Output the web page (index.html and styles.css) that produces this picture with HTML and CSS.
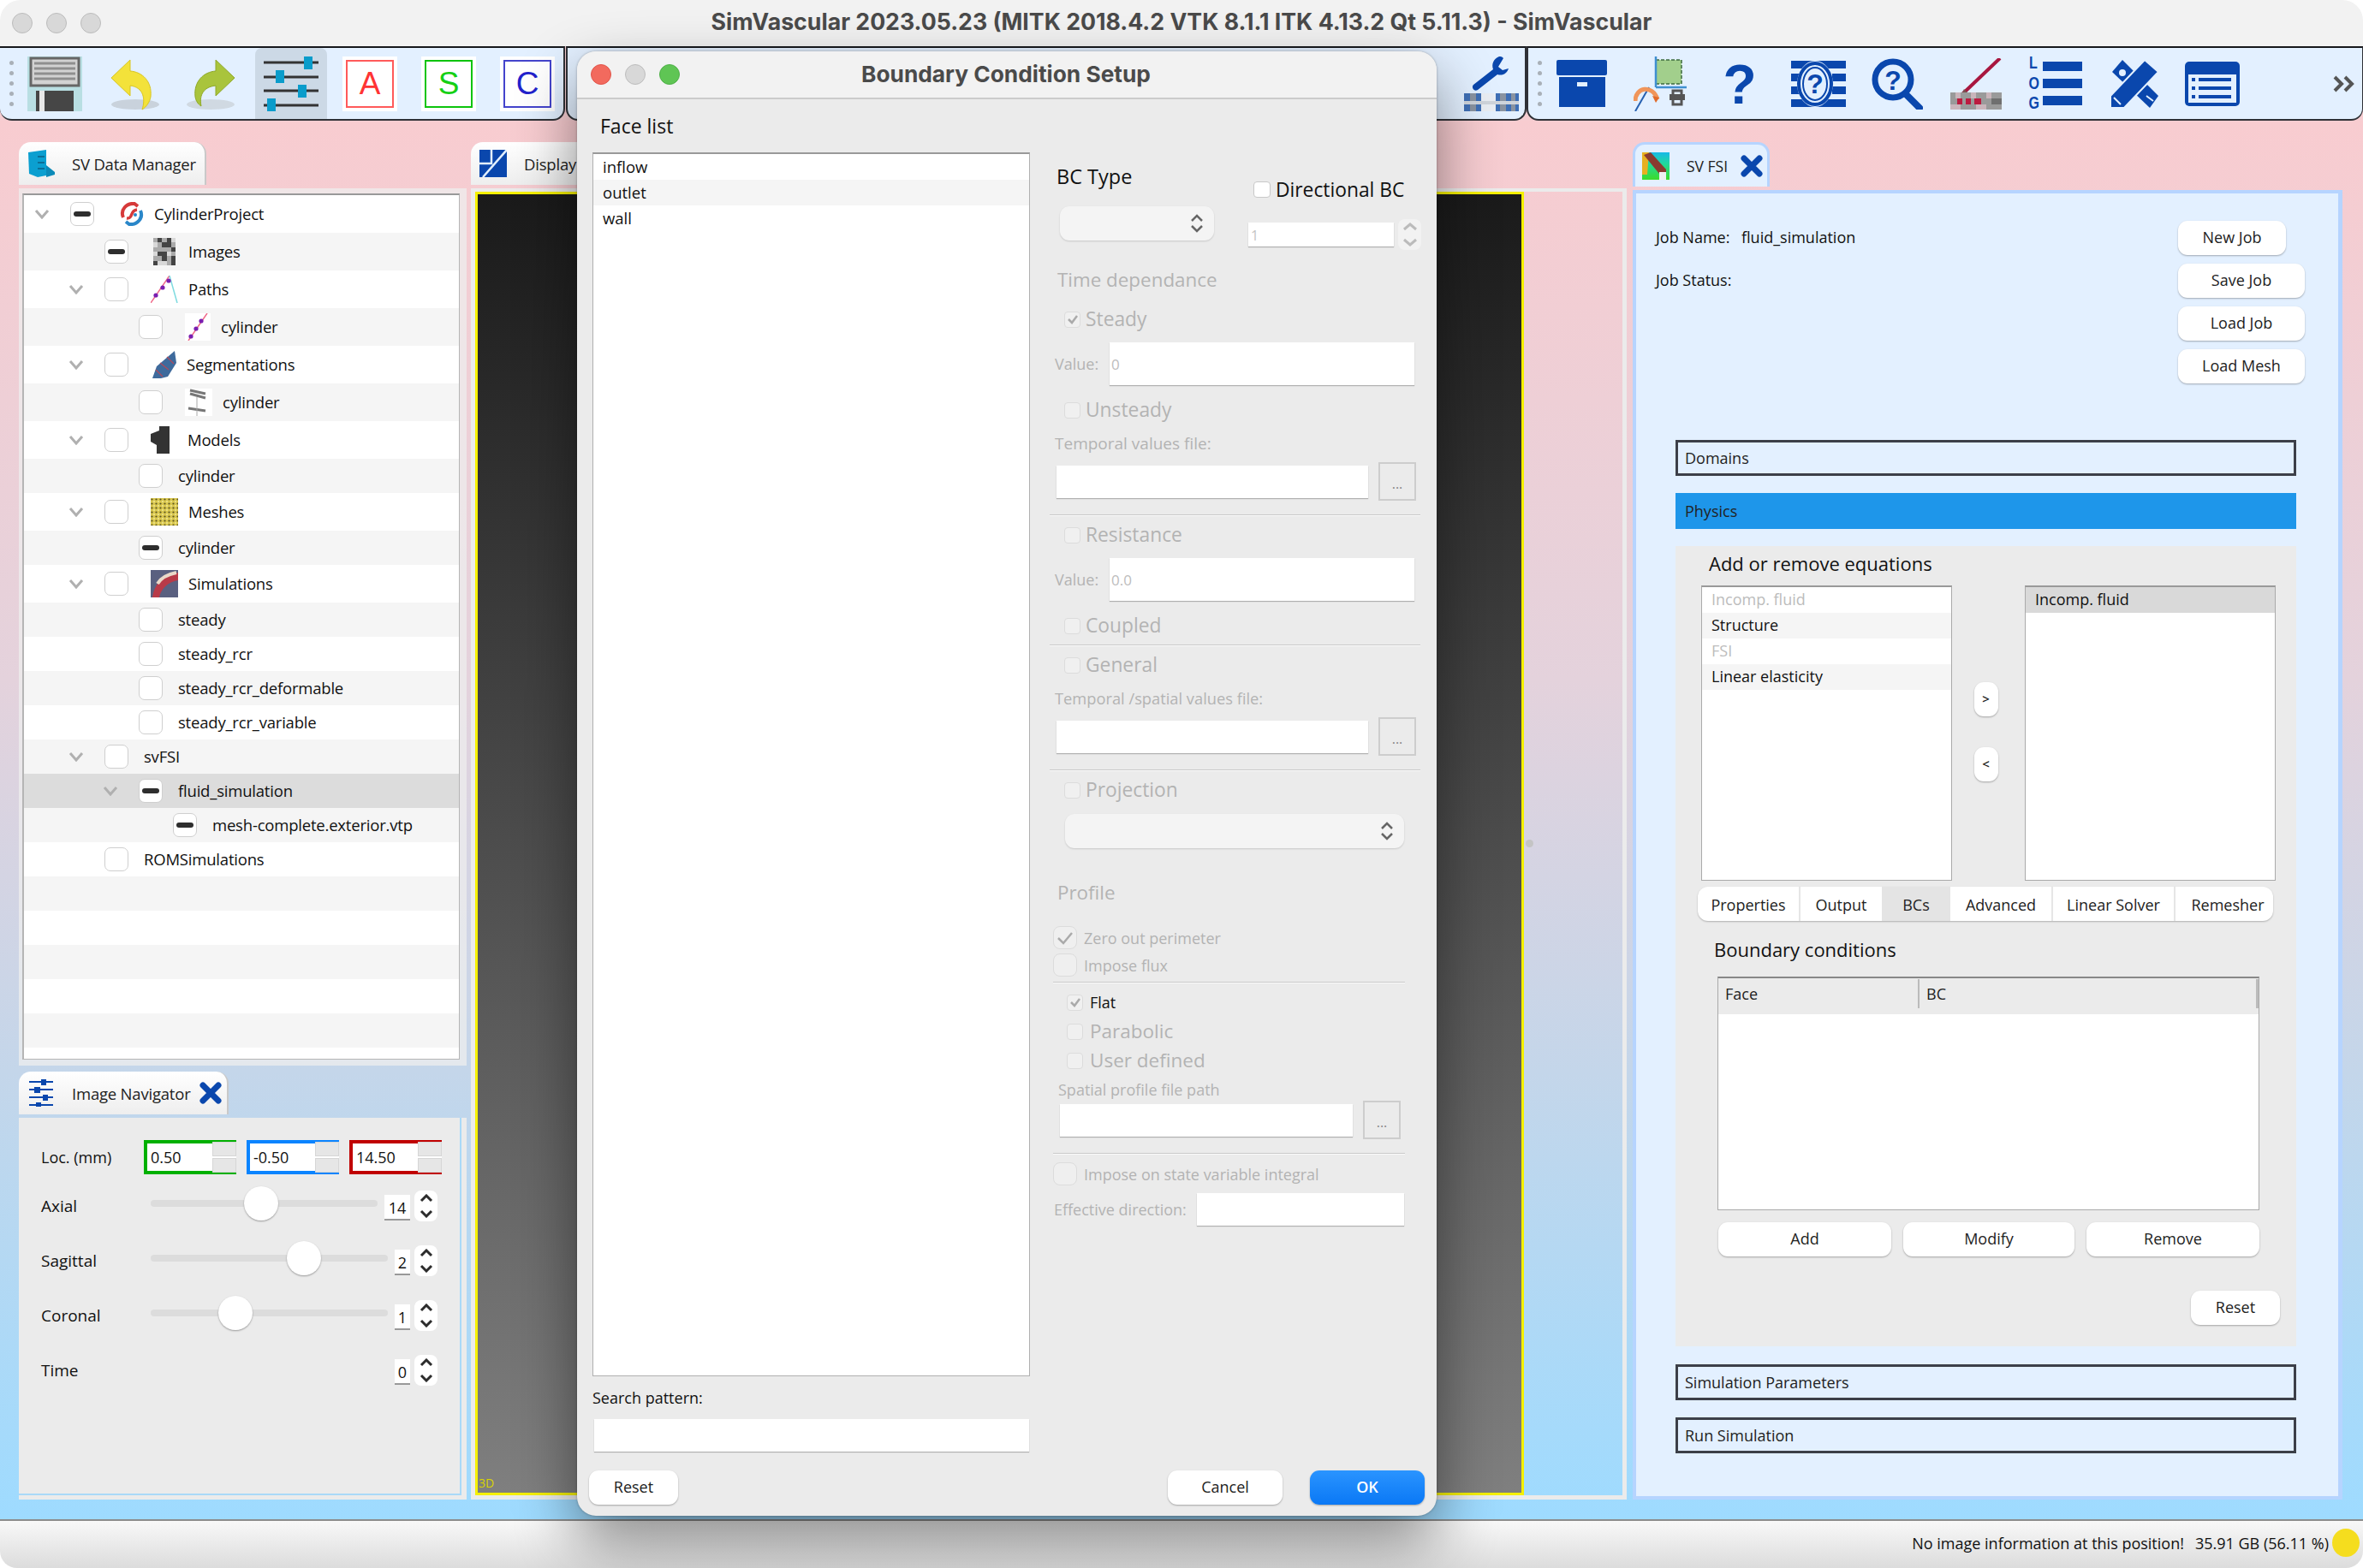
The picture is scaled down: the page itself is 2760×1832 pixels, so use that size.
FILE: index.html
```html
<!DOCTYPE html>
<html lang="en">
<head>
<meta charset="utf-8">
<title>SimVascular</title>
<link rel="stylesheet" href="styles.css">
</head>
<body>
<div class="app">
  <header class="titlebar">
    <div class="lights"><i class="light"></i><i class="light"></i><i class="light"></i></div>
    <div class="wintitle">SimVascular 2023.05.23 (MITK 2018.4.2 VTK 8.1.1 ITK 4.13.2 Qt 5.11.3) - SimVascular</div>
  </header>

  <div class="toolbar">
    <section class="tsec tsec-a">
      <div class="handle"><i></i><i></i><i></i><i></i><i></i></div>
      <div class="slot">
        <svg width="64" height="64" viewBox="0 0 64 64"><rect width="64" height="64" fill="#b9dfe3"/><rect x="4" y="2" width="56" height="32" fill="#d2d2d2" stroke="#666" stroke-width="3"/><path d="M8 8h48M8 14h48M8 20h48M8 26h48" stroke="#8f8f8f" stroke-width="3"/><rect x="10" y="40" width="44" height="24" fill="#464646"/><rect x="14" y="40" width="6" height="24" fill="#e8e8e8"/></svg>
      </div>
      <div class="slot">
        <svg width="64" height="64" viewBox="0 0 64 64"><ellipse cx="34" cy="56" rx="28" ry="6" fill="#c9d2dc"/><path d="M6 25 28 4v13c14 1 26 12 24 30-1 6-5 12-10 15 4-12 2-26-14-28v12z" fill="#f3e23a" stroke="#d9c520"/></svg>
      </div>
      <div class="slot">
        <svg width="64" height="64" viewBox="0 0 64 64"><ellipse cx="30" cy="56" rx="28" ry="6" fill="#d0d9e2"/><path d="M58 25 36 4v13C22 18 10 29 12 47c1 6 4 9 7 11-2-10 0-22 17-24v12z" fill="#a9c43c" stroke="#8fa828"/></svg>
      </div>
      <div class="slot slot-on">
        <svg width="64" height="64" viewBox="0 0 64 64"><path d="M0 7h64M0 24h64M0 40h64M0 57h64" stroke="#333" stroke-width="3"/><path d="M47 0h10v15H47zM14 16h10v15H14zM40 33h10v15H40zM4 49h10v15H4z" fill="#0a9ccb"/></svg>
      </div>
      <div class="slot"><div class="letter letter-a">A</div></div>
      <div class="slot"><div class="letter letter-s">S</div></div>
      <div class="slot"><div class="letter letter-c">C</div></div>
    </section>
    <section class="tsec tsec-b">
      <div class="slot slot-wrench">
        <svg width="66" height="64" viewBox="0 0 66 64" shape-rendering="geometricPrecision"><path d="M42 0c-7 3-9 9-7 15L12 33c-3 3 1 9 5 6l23-18c6 2 11-1 13-7l-7 2-5-4 6-10c-2-2-3-2-5-2z" fill="#0a47ad"/><path d="M1 43h64v21H1z" fill="#e9edf3"/><path d="M1 43h7v21H1zM15 43h6v21h-6zM38 43h5v21h-5zM50 43h6v21h-6zM61 43h4v21h-4z" fill="#3f6fb5"/><path d="M8 43h7v21H8zM43 43h7v21h-7zM56 43h5v21h-5z" fill="#8a93a0"/><path d="M1 52h64v4H1z" fill="#cfd4db"/></svg>
      </div>
    </section>
    <section class="tsec tsec-c">
      <div class="handle handle-c"><i></i><i></i><i></i><i></i><i></i></div>
      <div class="slot">
        <svg width="60" height="56" viewBox="0 0 60 56"><rect width="59" height="18" rx="2" fill="#0a47ad"/><rect x="3" y="20" width="54" height="35" fill="#0a47ad"/><rect x="24" y="26" width="12" height="5" fill="#e3f0ff"/></svg>
      </div>
      <div class="slot">
        <svg width="64" height="64" viewBox="0 0 64 64"><rect x="26" y="4" width="30" height="28" fill="#a2cf8c" stroke="#3e6b3e" stroke-width="1.5" stroke-dasharray="4 2"/><path d="M26 0v36M26 36h36" stroke="#3f8fd0" stroke-width="2.5"/><path d="M2 64 18 36" stroke="#2660b0" stroke-width="2"/><path d="M2 52c0-16 20-20 26-2" fill="none" stroke="#f0955a" stroke-width="5"/><path d="M22 46l8 2-4 6z" fill="#e06a2a"/><rect x="42" y="44" width="18" height="7" fill="#555"/><path d="M46 40h10v16H46z" fill="none" stroke="#555" stroke-width="3"/></svg>
      </div>
      <div class="slot">
        <svg width="40" height="74" viewBox="0 0 40 74"><text x="20" y="60" text-anchor="middle" class="qmark qmark-big">?</text></svg>
      </div>
      <div class="slot">
        <svg width="64" height="54" viewBox="0 0 64 54"><path d="M0 0h64v9H0zM0 15h16v9H0zM48 15h16v9H48zM0 30h16v9H0zM48 30h16v9H48zM0 45h64v9H0z" fill="#0a47ad"/><ellipse cx="28" cy="27" rx="21" ry="27" fill="#e3f0ff"/><ellipse cx="28" cy="27" rx="19" ry="24" fill="none" stroke="#0a47ad" stroke-width="4"/><ellipse cx="28" cy="27" rx="14" ry="19" fill="none" stroke="#0a47ad" stroke-width="2"/><text x="28" y="38" text-anchor="middle" class="qmark qmark-mid">?</text></svg>
      </div>
      <div class="slot">
        <svg width="60" height="60" viewBox="0 0 60 60"><circle cx="25" cy="25" r="21" fill="none" stroke="#0a47ad" stroke-width="7"/><path d="M40 42 56 58" stroke="#0a47ad" stroke-width="8" stroke-linecap="round"/><text x="25" y="37" text-anchor="middle" class="qmark qmark-mid">?</text></svg>
      </div>
      <div class="slot">
        <svg width="60" height="60" viewBox="0 0 60 60"><path d="M58 0 14 42" stroke="#a8163f" stroke-width="4"/><path d="M16 36l4 4-8 4z" fill="#7b5050"/><path d="M0 40h60v20H0z" fill="#9a9a9a"/><path d="M6 40h6v7H6zM24 40h6v7h-6zM42 40h6v7h-6zM0 54h12v6H0zM30 54h12v6H30z" fill="#c9b5bb"/><path d="M8 47h6v7H8zM18 47h6v7h-6zM28 47h8v7h-8z" fill="#bb1c40"/><path d="M48 47h12v7H48z" fill="#6f6f6f"/></svg>
      </div>
      <div class="slot">
        <div class="logicon">
          <span class="logletters">L<br>O<br>G</span>
          <svg width="46" height="52" viewBox="0 0 46 52"><path d="M0 0h46v11H0zM0 20h46v11H0zM0 40h46v11H0z" fill="#0a47ad"/></svg>
        </div>
      </div>
      <div class="slot">
        <svg width="58" height="56" viewBox="0 0 58 56"><path d="M16 0 58 42 48 56 4 14z" fill="#0a47ad"/><path d="M42 0 58 14 18 56H2V42z" fill="#0a47ad" stroke="#e3f0ff" stroke-width="2"/><circle cx="16" cy="15" r="4" fill="#e3f0ff"/><path d="M44 42l8 6M6 44l8 8" stroke="#e3f0ff" stroke-width="2"/></svg>
      </div>
      <div class="slot">
        <svg width="64" height="52" viewBox="0 0 64 52"><rect width="64" height="52" rx="5" fill="#0a47ad"/><rect x="4" y="15" width="56" height="33" fill="#e3f0ff"/><path d="M8 21h4M16 21h38M8 31h4M16 31h38M8 41h4M16 41h38" stroke="#0a47ad" stroke-width="4"/></svg>
      </div>
      <svg class="more" width="28" height="20" viewBox="0 0 28 20"><path d="M3 2l8 8-8 8M15 2l8 8-8 8" fill="none" stroke="#555" stroke-width="4"/></svg>
    </section>
  </div>

  <main class="workspace">
    <div class="dock dock-left">
      <div class="tab tab-dm">
        <svg class="tabicon" width="32" height="32" viewBox="0 0 32 32"><path d="M1 3 22 0v30l-10 2-10-4z" fill="#0b9fd0"/><path d="M22 18l10 8v3l-10 3z" fill="#0b8ab8"/><path d="M12 8h8M12 15h8M12 22h8" stroke="#0b6e96" stroke-width="2"/></svg>
        <span>SV Data Manager</span>
      </div>
      <div class="frame frame-tree">
        <div class="tree">
          <div class="row tall l0"><span class="chev"><svg width="18" height="12" viewBox="0 0 18 12"><path d="M2 2l7 8 7-8" class="chevline"/></svg></span><i class="cb on"></i>
            <svg class="ic ic-a" width="28" height="28" viewBox="0 0 28 28"><path d="M4 18C0 9 8 1 17 2l4 3" fill="none" stroke="#d63a3a" stroke-width="4"/><path d="M24 10c4 9-4 17-13 16l-4-3" fill="none" stroke="#2a87c9" stroke-width="4"/><path d="M8 19c8 1 3-9 12-10" stroke="#d63a3a" stroke-width="3.5" fill="none"/><circle cx="18" cy="15" r="2" fill="#2a87c9"/></svg>
            <span class="t t-a">CylinderProject</span></div>
          <div class="row tall alt l1"><span class="chev"></span><i class="cb on"></i>
            <svg class="ic ic-b" width="32" height="32" viewBox="0 0 5 6" shape-rendering="crispEdges"><path d="M0 0h5v6H0z" fill="#aaa"/><path d="M1 0h1v1H1zM3 0h1v2H3zM2 1h1v1H2zM4 2h1v1H4zM1 3h2v1H1zM2 4h1v1H2zM0 5h1v1H0zM4 4h1v2H4z" fill="#444"/><path d="M0 1h1v1H0zM4 0h1v1H4zM0 3h1v1H0zM3 3h1v1H3zM1 5h2v1H1z" fill="#d8d8d8"/></svg>
            <span class="t">Images</span></div>
          <div class="row tall l1"><span class="chev"><svg width="18" height="12" viewBox="0 0 18 12"><path d="M2 2l7 8 7-8" class="chevline"/></svg></span><i class="cb"></i>
            <svg class="ic ic-b" width="32" height="32" viewBox="0 0 32 32"><path d="M0 32 22 0" stroke="#f06a8a" stroke-width="1.5"/><path d="M22 0l9 32" stroke="#7fdbe0" stroke-width="1.5"/><circle cx="6" cy="23" r="2.6" fill="#7a1fb0"/><circle cx="14" cy="14" r="2.6" fill="#7a1fb0"/><circle cx="21" cy="6" r="2.6" fill="#7a1fb0"/></svg>
            <span class="t">Paths</span></div>
          <div class="row tall alt l2"><span class="chev"></span><i class="cb"></i>
            <svg class="ic ic-c" width="30" height="32" viewBox="0 0 30 32"><rect width="30" height="32" fill="#fff"/><path d="M4 32 26 0" stroke="#f06a8a" stroke-width="1.5"/><circle cx="7" cy="27" r="2.6" fill="#7a1fb0"/><circle cx="13" cy="18" r="2.6" fill="#7a1fb0"/><circle cx="19" cy="9" r="2.6" fill="#7a1fb0"/></svg>
            <span class="t">cylinder</span></div>
          <div class="row tall l1"><span class="chev"><svg width="18" height="12" viewBox="0 0 18 12"><path d="M2 2l7 8 7-8" class="chevline"/></svg></span><i class="cb"></i>
            <svg class="ic ic-d" width="28" height="32" viewBox="0 0 28 32"><path d="M0 32 5 18 26 0l2 14-10 16-8 2z" fill="#3e6a9c"/><path d="M9 14l10 8M17 7l8 8M4 22l8 8" stroke="#b04a5c" stroke-width="1.2"/></svg>
            <span class="t">Segmentations</span></div>
          <div class="row tall alt l2"><span class="chev"></span><i class="cb"></i>
            <svg class="ic ic-c" width="32" height="32" viewBox="0 0 32 32"><rect width="32" height="32" fill="#fff"/><path d="M6 2l18 4M6 6l18 5M4 23l20 3" stroke="#777" stroke-width="3"/><path d="M14 10v22" stroke="#aaa"/></svg>
            <span class="t">cylinder</span></div>
          <div class="row tall l1"><span class="chev"><svg width="18" height="12" viewBox="0 0 18 12"><path d="M2 2l7 8 7-8" class="chevline"/></svg></span><i class="cb"></i>
            <svg class="ic ic-e" width="22" height="32" viewBox="0 0 22 32"><path d="M10 0h12v32H7V22l-7-4V9l10-4z" fill="#333"/></svg>
            <span class="t">Models</span></div>
          <div class="row alt l2"><span class="chev"></span><i class="cb"></i><span class="t t-n">cylinder</span></div>
          <div class="row tall l1"><span class="chev"><svg width="18" height="12" viewBox="0 0 18 12"><path d="M2 2l7 8 7-8" class="chevline"/></svg></span><i class="cb"></i>
            <svg class="ic ic-b" width="32" height="32" viewBox="0 0 32 32"><defs><pattern id="mesh" width="5" height="5" patternUnits="userSpaceOnUse"><rect width="5" height="5" fill="#d9c74f"/><circle cx="1.5" cy="1.5" r="1.1" fill="#5c5420"/><circle cx="4" cy="4" r=".9" fill="#f3ec9a"/></pattern></defs><rect width="32" height="32" fill="url(#mesh)"/></svg>
            <span class="t">Meshes</span></div>
          <div class="row alt l2"><span class="chev"></span><i class="cb on"></i><span class="t t-n">cylinder</span></div>
          <div class="row tall l1"><span class="chev"><svg width="18" height="12" viewBox="0 0 18 12"><path d="M2 2l7 8 7-8" class="chevline"/></svg></span><i class="cb"></i>
            <svg class="ic ic-b" width="32" height="32" viewBox="0 0 32 32"><rect width="32" height="32" fill="#5a6080"/><path d="M2 32C4 16 14 6 32 3v9C20 14 12 22 10 32z" fill="#b83a48"/><path d="M8 16C12 9 20 5 30 3" stroke="#e9d9c9" stroke-width="4" fill="none"/></svg>
            <span class="t">Simulations</span></div>
          <div class="row alt l2"><span class="chev"></span><i class="cb"></i><span class="t t-n">steady</span></div>
          <div class="row l2"><span class="chev"></span><i class="cb"></i><span class="t t-n">steady_rcr</span></div>
          <div class="row alt l2"><span class="chev"></span><i class="cb"></i><span class="t t-n">steady_rcr_deformable</span></div>
          <div class="row l2"><span class="chev"></span><i class="cb"></i><span class="t t-n">steady_rcr_variable</span></div>
          <div class="row alt l1"><span class="chev"><svg width="18" height="12" viewBox="0 0 18 12"><path d="M2 2l7 8 7-8" class="chevline"/></svg></span><i class="cb"></i><span class="t t-n">svFSI</span></div>
          <div class="row sel l2"><span class="chev"><svg width="18" height="12" viewBox="0 0 18 12"><path d="M2 2l7 8 7-8" class="chevline"/></svg></span><i class="cb on"></i><span class="t t-n">fluid_simulation</span></div>
          <div class="row alt l3"><span class="chev"></span><i class="cb on"></i><span class="t t-n">mesh-complete.exterior.vtp</span></div>
          <div class="row l1"><span class="chev"></span><i class="cb"></i><span class="t t-n">ROMSimulations</span></div>
          <div class="row alt"></div><div class="row"></div><div class="row alt"></div><div class="row"></div><div class="row alt"></div>
        </div>
      </div>

      <div class="tab tab-nav">
        <svg class="tabicon tabicon-nav" width="28" height="32" viewBox="0 0 28 32"><path d="M0 3h28M0 12h28M0 21h28M0 30h28" stroke="#0a47ad" stroke-width="2"/><path d="M14 0h6v7h-6zM6 9h7v7H6zM16 18h6v7h-6zM8 27h6v5H8z" fill="#0a47ad"/></svg>
        <span>Image Navigator</span>
        <svg class="close" width="26" height="26" viewBox="0 0 26 26"><path d="M4 4 22 22M22 4 4 22" stroke="#0a47ad" stroke-width="7" stroke-linecap="round"/></svg>
      </div>
      <div class="frame frame-nav">
        <div class="navinner">
          <div class="locrow">
            <span class="navlabel">Loc. (mm)</span>
            <div class="spin spin-g"><span>0.50</span><div class="spinbtns"><i></i><i></i></div></div>
            <div class="spin spin-b"><span>-0.50</span><div class="spinbtns"><i></i><i></i></div></div>
            <div class="spin spin-r"><span>14.50</span><div class="spinbtns"><i></i><i></i></div></div>
          </div>
          <div class="slrow">
            <span class="navlabel">Axial</span>
            <div class="track"><i class="thumb" style="left:109px"></i></div>
            <span class="val val-wide">14</span>
            <div class="arrows"><svg width="16" height="10" viewBox="0 0 16 10"><path d="M2 8l6-6 6 6" class="arrowline"/></svg><svg width="16" height="10" viewBox="0 0 16 10"><path d="M2 2l6 6 6-6" class="arrowline"/></svg></div>
          </div>
          <div class="slrow">
            <span class="navlabel">Sagittal</span>
            <div class="track"><i class="thumb" style="left:159px"></i></div>
            <span class="val">2</span>
            <div class="arrows"><svg width="16" height="10" viewBox="0 0 16 10"><path d="M2 8l6-6 6 6" class="arrowline"/></svg><svg width="16" height="10" viewBox="0 0 16 10"><path d="M2 2l6 6 6-6" class="arrowline"/></svg></div>
          </div>
          <div class="slrow">
            <span class="navlabel">Coronal</span>
            <div class="track"><i class="thumb" style="left:79px"></i></div>
            <span class="val">1</span>
            <div class="arrows"><svg width="16" height="10" viewBox="0 0 16 10"><path d="M2 8l6-6 6 6" class="arrowline"/></svg><svg width="16" height="10" viewBox="0 0 16 10"><path d="M2 2l6 6 6-6" class="arrowline"/></svg></div>
          </div>
          <div class="slrow">
            <span class="navlabel">Time</span>
            <div class="notrack"></div>
            <span class="val">0</span>
            <div class="arrows"><svg width="16" height="10" viewBox="0 0 16 10"><path d="M2 8l6-6 6 6" class="arrowline"/></svg><svg width="16" height="10" viewBox="0 0 16 10"><path d="M2 2l6 6 6-6" class="arrowline"/></svg></div>
          </div>
        </div>
      </div>
    </div>

    <div class="dock dock-center">
      <div class="tab tab-disp">
        <svg class="tabicon" width="32" height="32" viewBox="0 0 32 32"><rect width="32" height="32" fill="#0a47ad"/><path d="M14 0v16H0M32 0 4 32" stroke="#e3f0ff" stroke-width="2.5" fill="none"/></svg>
        <span>Display</span>
      </div>
      <div class="frame-view">
        <div class="viewport"><span class="v3d">3D</span></div>
        <div class="split"><i class="splitdot"></i></div>
      </div>
    </div>

    <div class="dock dock-right">
      <div class="tab tab-fsi">
        <svg class="fsiicon" width="32" height="32" viewBox="0 0 32 32"><defs><linearGradient id="fsi" x1="0" y1="0" x2="0" y2="1"><stop offset="0" stop-color="#18b8e8"/><stop offset=".4" stop-color="#20d8a0"/><stop offset="1" stop-color="#3cdc28"/></linearGradient></defs><rect width="32" height="32" fill="url(#fsi)"/><path d="M0 0h8l-2 26H0z" fill="#e8b020"/><path d="M2 3l8-3 18 20v4l-8 1z" fill="#8a3a30"/><rect x="20" y="23" width="8" height="9" fill="#f0f0f0"/></svg>
        <span>SV FSI</span>
        <svg class="close close-fsi" width="26" height="26" viewBox="0 0 26 26"><path d="M4 4 22 22M22 4 4 22" stroke="#0a47ad" stroke-width="7" stroke-linecap="round"/></svg>
      </div>
      <div class="panel">
        <div class="jobarea">
          <div class="joblabels">
            <div class="jobline"><span class="joblab">Job Name:</span><span>fluid_simulation</span></div>
            <div class="jobline"><span class="joblab">Job Status:</span></div>
          </div>
          <div class="jobbtns">
            <button class="btn btn-new">New Job</button>
            <button class="btn">Save Job</button>
            <button class="btn">Load Job</button>
            <button class="btn">Load Mesh</button>
          </div>
        </div>
        <div class="accordion">
          <div class="acc">Domains</div>
          <div class="acc acc-on">Physics</div>
          <div class="phys">
            <div class="h-eq">Add or remove equations</div>
            <div class="eqlists">
              <div class="list">
                <div class="li li-first dis">Incomp. fluid</div>
                <div class="li alt">Structure</div>
                <div class="li dis">FSI</div>
                <div class="li alt">Linear elasticity</div>
              </div>
              <div class="movebtns"><button class="btn btn-move">&gt;</button><button class="btn btn-move">&lt;</button></div>
              <div class="list">
                <div class="li li-first li-sel">Incomp. fluid</div>
              </div>
            </div>
            <div class="tabs">
              <div class="seg seg-1">Properties</div>
              <div class="seg seg-2">Output</div>
              <div class="seg seg-3">BCs</div>
              <div class="seg seg-4">Advanced</div>
              <div class="seg seg-5">Linear Solver</div>
              <div class="seg seg-6">Remesher</div>
            </div>
            <div class="h-bc">Boundary conditions</div>
            <div class="table">
              <div class="thead"><div class="th th-face">Face</div><div class="th th-bc">BC</div></div>
            </div>
            <div class="bcbtns">
              <button class="btn btn-add">Add</button>
              <button class="btn btn-mod">Modify</button>
              <button class="btn btn-add">Remove</button>
            </div>
            <button class="btn btn-reset">Reset</button>
          </div>
          <div class="acc acc-sim">Simulation Parameters</div>
          <div class="acc">Run Simulation</div>
        </div>
      </div>
    </div>
  </main>

  <footer class="statusbar">
    <span>No image information at this position!</span>
    <span>35.91 GB (56.11 %)</span>
    <i class="memdot"></i>
  </footer>
</div>

<div class="dialog">
  <div class="dlgtitle">
    <div class="lights"><i class="light l-red"></i><i class="light"></i><i class="light l-green"></i></div>
    <div class="dlgname">Boundary Condition Setup</div>
  </div>
  <div class="dlgbody">
    <div class="lcol">
      <div class="facelabel">Face list</div>
      <div class="facelist">
        <div class="fitem">inflow</div>
        <div class="fitem alt">outlet</div>
        <div class="fitem">wall</div>
      </div>
      <div class="searchlabel">Search pattern:</div>
      <div class="field field-search"></div>
      <button class="btn btn-dreset">Reset</button>
    </div>
    <div class="rcol">
      <div class="bctop">
        <div class="bcleft">
          <div class="bctype">BC Type</div>
          <div class="combo combo-bc"><svg width="16" height="24" viewBox="0 0 16 24"><path d="M2 9l6-6 6 6M2 15l6 6 6-6" class="comboline"/></svg></div>
        </div>
        <div class="bcright">
          <div class="dirline"><i class="dcb dcb-white"></i><span>Directional BC</span></div>
          <div class="dirspin">
            <div class="dirfield">1</div>
            <div class="arrows arrows-dis"><svg width="20" height="10" viewBox="0 0 20 10"><path d="M3 8l7-6 7 6" class="arrowline"/></svg><svg width="20" height="10" viewBox="0 0 20 10"><path d="M3 2l7 6 7-6" class="arrowline"/></svg></div>
          </div>
        </div>
      </div>
      <div class="hd m-time">Time dependance</div>
      <div class="opt m-steady"><i class="dcb"><svg width="14" height="12" viewBox="0 0 14 12"><path d="M2 6l4 4 6-8" class="checkline"/></svg></i><span>Steady</span></div>
      <div class="valrow m-val"><span class="vlab">Value:</span><div class="field field-val">0</div></div>
      <div class="opt m-uns"><i class="dcb"></i><span>Unsteady</span></div>
      <div class="slab m-tv">Temporal values file:</div>
      <div class="filerow m-f1"><div class="field field-file"></div><div class="dots">...</div></div>
      <div class="sep m-s1"></div>
      <div class="opt m-res"><i class="dcb"></i><span>Resistance</span></div>
      <div class="valrow m-val2"><span class="vlab">Value:</span><div class="field field-val">0.0</div></div>
      <div class="opt m-uns"><i class="dcb"></i><span>Coupled</span></div>
      <div class="sep m-s2"></div>
      <div class="opt m-res"><i class="dcb"></i><span>General</span></div>
      <div class="slab slab-sm m-ts">Temporal /spatial values file:</div>
      <div class="filerow m-f2"><div class="field field-file"></div><div class="dots">...</div></div>
      <div class="sep m-s1"></div>
      <div class="opt m-res"><i class="dcb"></i><span>Projection</span></div>
      <div class="combo combo-proj"><svg width="16" height="24" viewBox="0 0 16 24"><path d="M2 9l6-6 6 6M2 15l6 6 6-6" class="comboline"/></svg></div>
      <div class="hd m-prof">Profile</div>
      <div class="optbig m-zero"><i class="dcbb"><svg width="22" height="18" viewBox="0 0 22 18"><path d="M3 9l6 6 10-12" class="checkline"/></svg></i><span>Zero out perimeter</span></div>
      <div class="optbig m-flux"><i class="dcbb"></i><span>Impose flux</span></div>
      <div class="sep sep-short m-s3"></div>
      <div class="opt opt-in m-flat"><i class="dcb"><svg width="14" height="12" viewBox="0 0 14 12"><path d="M2 6l4 4 6-8" class="checkline"/></svg></i><span class="flat">Flat</span></div>
      <div class="opt opt-in m-para"><i class="dcb"></i><span>Parabolic</span></div>
      <div class="opt opt-in m-para"><i class="dcb"></i><span>User defined</span></div>
      <div class="slab slab-in m-sp">Spatial profile file path</div>
      <div class="filerow filerow-in"><div class="field field-file2"></div><div class="dots">...</div></div>
      <div class="sep sep-short m-s1"></div>
      <div class="optbig m-imp"><i class="dcbb"></i><span>Impose on state variable integral</span></div>
      <div class="effrow"><span class="efflab">Effective direction:</span><div class="field field-eff"></div></div>
      <div class="dlgfoot">
        <button class="btn btn-cancel">Cancel</button>
        <button class="btn btn-ok">OK</button>
      </div>
    </div>
  </div>
</div>
</body>
</html>
```

FILE: styles.css
```css
* { box-sizing: border-box; }
html, body { margin: 0; padding: 0; }
body { width: 2760px; height: 1832px; position: relative; overflow: hidden; background: #fff; font-family: "Open Sans", "Noto Sans", sans-serif; font-size: 19px; color: #111; }
i { display: block; font-style: normal; }
button { font-family: inherit; }

.app { width: 2760px; height: 1832px; display: flex; flex-direction: column; }

.titlebar { height: 54px; flex: none; background: #f2f2f2; border-radius: 24px 24px 0 0; display: flex; align-items: center; position: relative; }
.lights { display: flex; gap: 16px; padding-left: 14px; }
.light { width: 24px; height: 24px; border-radius: 50%; background: #d8d8d8; border: 1px solid #bcbcbc; }
.l-red { background: #f26a5e; border-color: #e0544a; }
.l-green { background: #5fc554; border-color: #4fb048; }
.wintitle { position: absolute; left: 0; right: 0; top: 9px; text-align: center; font-family: Inter, "Noto Sans", sans-serif; font-weight: 700; font-size: 26.7px; color: #4a4a4a; white-space: nowrap; }

.toolbar { height: 87px; flex: none; display: flex; background: #f6cdd1; }
.tsec { height: 87px; display: flex; align-items: center; background: #e3f0ff; border: 2px solid #2f3136; border-top-color: #16181c; border-radius: 0 0 14px 14px; flex: none; overflow: hidden; }
.tsec-a { width: 660px; border-left: 0; }
.tsec-b { width: 1122px; margin-left: 1px; justify-content: flex-end; }
.tsec-c { flex: 1; border-right-width: 1px; }
.handle { width: 18px; flex: none; padding-left: 11px; display: flex; flex-direction: column; gap: 7px; }
.handle i { width: 5px; height: 5px; border-radius: 50%; background: #a9b0b8; }
.handle-c { width: 17px; padding-left: 11px; }
.slot { width: 92px; height: 83px; flex: none; display: flex; align-items: center; justify-content: center; }
.slot-on { background: #ccd9e6; border-radius: 8px 8px 0 0; width: 84px; margin: 0 4px; }
.slot-wrench { width: 78px; }
.letter { width: 64px; height: 64px; background: #fff; display: flex; align-items: center; justify-content: center; font-family: "Liberation Sans", sans-serif; font-size: 37px; }
.letter-a { color: #ff3434; box-shadow: inset 0 0 0 4px #fff, inset 0 0 0 6px #ff5a5a; }
.letter-s { color: #15d015; box-shadow: inset 0 0 0 4px #fff, inset 0 0 0 6px #0cc40c; }
.letter-c { color: #2222cc; box-shadow: inset 0 0 0 4px #fff, inset 0 0 0 6px #4444cc; }
.qmark { font-family: "Liberation Sans", sans-serif; font-weight: 700; fill: #0a47ad; }
.qmark-big { font-size: 64px; }
.qmark-mid { font-size: 32px; }
.logicon { width: 64px; height: 72px; display: flex; align-items: center; justify-content: space-between; }
.logletters { width: 14px; font-family: "Liberation Sans", sans-serif; font-weight: 700; font-size: 20px; line-height: 23.5px; color: #0a47ad; text-align: center; transform: scaleX(.8); }
.more { margin-left: auto; margin-right: 7px; flex: none; }

.workspace { height: 1634px; flex: none; padding: 25px 0 0 22px; display: flex; background: linear-gradient(180deg, #f8ccd0 0%, #e4d2dc 40%, #c4d6ea 68%, #9edbff 100%); }
.dock { display: flex; flex-direction: column; flex: none; }
.dock-left { width: 523px; }
.dock-center { width: 1350px; margin-left: 5px; }
.dock-right { width: 830px; margin-left: 7px; }

.tab { height: 50px; flex: none; display: flex; align-items: center; background: linear-gradient(180deg, #fff, #eeeeee); border-radius: 14px 14px 0 0; border-right: 2px solid #c9c9c9; color: #222; font-size: 18.5px; letter-spacing: -.2px; white-space: nowrap; }
.tabicon { margin-left: 10px; margin-right: 20px; flex: none; }
.tabicon-nav { margin-left: 12px; margin-right: 22px; }
.tab-dm { width: 219px; }
.tab-nav { width: 245px; margin-top: 7px; }
.tab-nav .close { margin-left: 10px; }
.tab-disp { width: 200px; }
.close { flex: none; }

.frame { background: rgba(238,238,238,.75); flex: none; }
.frame-tree { margin-top: 4px; height: 1025px; padding: 6px 8px 7px 4px; }
.tree { height: 100%; background: #fff; border: 1px solid #b5b5b5; border-top: 2px solid #999; border-left-width: 2px; overflow: hidden; }
.row { height: 40px; display: flex; align-items: center; background: #fff; }
.tall { height: 44px; }
.alt { background: #f5f5f5; }
.sel { background: #dcdcdc; }
.l0 { padding-left: 1px; }
.l1 { padding-left: 41px; }
.l2 { padding-left: 81px; }
.l3 { padding-left: 121px; }
.chev { width: 40px; margin-right: 13px; flex: none; display: flex; justify-content: center; }
.chevline { fill: none; stroke: #b0b0b0; stroke-width: 3; }
.cb { width: 28px; height: 28px; border: 1px solid #cfcfcf; border-radius: 7px; background: #fff; flex: none; display: flex; align-items: center; justify-content: center; }
.cb.on::after { content: ""; width: 20px; height: 6px; border-radius: 3px; background: #2e2e2e; }
.ic { flex: none; }
.ic-a { margin-left: 30px; }
.ic-b { margin-left: 26px; }
.ic-c { margin-left: 26px; }
.ic-d { margin-left: 28px; }
.ic-e { margin-left: 26px; margin-right: 9px; }
.t { margin: -1px 0 0 12px; font-size: 18.5px; letter-spacing: -.2px; white-space: nowrap; color: #111; }
.t-n { margin-left: 18px; }

.frame-nav { margin-top: 4px; height: 446px; padding: 0 6px 5px 0; background: #ebebeb; }
.navinner { height: 100%; border-right: 2px solid #a9d9f8; border-bottom: 2px solid #a9d9f8; padding: 26px 0 0 26px; }
.navlabel { width: 120px; flex: none; font-size: 19px; color: #111; }
.locrow { display: flex; align-items: center; gap: 12px; }
.locrow .navlabel { margin-right: -12px; font-size: 18px; }
.spin { width: 108px; height: 40px; border: 4px solid; background: #fff; display: flex; align-items: center; justify-content: space-between; font-size: 18px; padding-left: 4px; color: #111; }
.spin-g { border-color: #00b000; }
.spin-b { border-color: #0a84ff; }
.spin-r { border-color: #c00000; }
.spinbtns { width: 28px; height: 36px; margin-right: -4px; display: flex; flex-direction: column; gap: 2px; background: #fff; flex: none; }
.spinbtns i { flex: 1; background: #e6e6e6; border: 1px solid #d6d6d6; }
.slrow { height: 64px; width: 463px; display: flex; align-items: center; }
.locrow + .slrow { margin-top: 5px; }
.slrow .navlabel { width: 128px; }
.track { flex: 1; height: 8px; background: #dcdcdc; border-radius: 4px; position: relative; margin-bottom: 6px; }
.notrack { flex: 1; }
.thumb { position: absolute; top: -16px; width: 40px; height: 40px; border-radius: 50%; background: #fff; box-shadow: 0 1px 2px rgba(0,0,0,.35); }
.val { width: 18px; height: 30px; margin: 3px 0 0 8px; background: #fff; border-bottom: 2px solid #999; text-align: center; font-size: 18px; line-height: 30px; flex: none; color: #111; }
.val-wide { width: 30px; }
.arrows { width: 27px; height: 36px; margin-left: 5px; background: #fff; border-radius: 8px; display: flex; flex-direction: column; align-items: center; justify-content: space-around; flex: none; }
.arrowline { fill: none; stroke: #2c2c2c; stroke-width: 3; }
.arrows-dis .arrowline { stroke: #bbb; }

.frame-view { margin-top: 4px; height: 1532px; border: 4px solid #ebebeb; border-right-width: 5px; border-bottom-width: 5px; border-left-width: 5px; display: flex; }
.viewport { width: 1225px; height: 100%; border: 3px solid #f5f000; background: linear-gradient(180deg, #1a1a1a, #7f7f7f); position: relative; flex: none; }
.v3d { position: absolute; left: 1px; bottom: 2px; color: #d8d400; font-size: 14px; }
.split { flex: 1; display: flex; align-items: center; padding-left: 2px; }
.splitdot { width: 9px; height: 9px; border-radius: 50%; background: #c4c4c4; }

.tab-fsi { width: 160px; height: 52px; background: #e3f0ff; border: 3px solid #b6d4ff; border-bottom: 0; border-radius: 14px 14px 0 0; font-size: 17.5px; letter-spacing: 0; }
.fsiicon { margin-left: 8px; margin-right: 20px; flex: none; }
.close-fsi { margin-left: 15px; }
.panel { margin-top: 4px; height: 1530px; width: 829px; border: 4px solid #b6d4ff; border-right-width: 5px; background: #e3f0ff; flex: none; }
.jobarea { display: flex; justify-content: space-between; padding: 32px 39px 0 22px; }
.joblabels { display: flex; flex-direction: column; gap: 10px; }
.jobline { height: 40px; display: flex; align-items: center; font-size: 18px; color: #111; padding: 0 0 2px 1px; }
.joblab { width: 100px; }
.jobbtns { width: 148px; display: flex; flex-direction: column; gap: 10px; }
.btn { height: 40px; background: #fff; border: 0; border-radius: 11px; box-shadow: 0 1px 2px rgba(0,0,0,.3); font-size: 18px; color: #222; padding: 0 0 2px; flex: none; }
.btn-new { width: 126px; }
.accordion { margin-top: 66px; padding: 0 49px 0 46px; }
.acc { height: 42px; border: 3px solid #3c3f48; display: flex; align-items: center; padding-left: 8px; font-size: 18px; color: #222; margin-bottom: 20px; }
.acc-on { background: #1e96ea; border-color: #1e96ea; }
.acc-sim { margin-top: 0; }
.phys { height: 935px; background: #ebebeb; padding-left: 26px; margin-bottom: 21px; }
.h-eq { height: 42px; display: flex; align-items: center; padding: 0 0 2px 13px; font-size: 22px; color: #111; }
.eqlists { display: flex; height: 345px; margin: 4px 0 0 4px; }
.list { width: 293px; height: 345px; background: #fff; border: 1px solid #aaa; border-top: 2px solid #999; flex: none; }
.movebtns { width: 85px; display: flex; flex-direction: column; align-items: center; justify-content: center; gap: 36px; padding: 0 6px 3px 0; }
.btn-move { width: 28px; font-size: 15px; font-weight: 600; }
.li { height: 30px; display: flex; align-items: center; padding: 0 0 2px 11px; font-size: 18px; color: #111; }
.li-first { height: 30px; }
.dis { color: #bcbcbc; }
.li-sel { background: #d9d9d9; }
.tabs { display: flex; height: 40px; width: 672px; margin-top: 7px; background: #fff; border-radius: 12px; box-shadow: 0 1px 2px rgba(0,0,0,.25); overflow: hidden; }
.seg { display: flex; align-items: center; justify-content: center; font-size: 18px; color: #222; border-right: 2px solid #e6e6e6; flex: none; padding-top: 2px; }
.seg-1 { width: 120px; }
.seg-2 { width: 95px; border-right: 0; }
.seg-3 { width: 80px; background: #e4e4e4; border-right: 0; }
.seg-4 { width: 120px; }
.seg-5 { width: 143px; }
.seg-6 { width: 114px; border-right: 0; padding-left: 8px; }
.h-bc { height: 40px; margin-top: 14px; padding: 0 0 2px 19px; display: flex; align-items: center; font-size: 22px; color: #111; }
.table { width: 633px; height: 273px; margin: 11px 0 0 23px; background: #fff; border: 1px solid #aaa; border-top: 2px solid #888; }
.thead { height: 42px; background: #ebebeb; display: flex; }
.th { height: 34px; margin-top: 1px; display: flex; align-items: center; font-size: 18px; color: #222; padding-left: 8px; }
.th-face { width: 235px; border-right: 2px solid #bbb; }
.th-bc { flex: 1; border-right: 3px solid #bbb; }
.bcbtns { display: flex; gap: 14px; margin: 14px 0 0 24px; }
.btn-add { width: 202px; }
.btn-mod { width: 200px; }
.btn-reset { display: block; width: 104px; margin: 40px 0 0 576px; }

.statusbar { height: 57px; flex: none; border-top: 2px solid #8c8c8c; background: linear-gradient(180deg, #f8f8f8, #dcdcdc); border-radius: 0 0 20px 20px; display: flex; justify-content: flex-end; align-items: center; gap: 13px; padding: 0 4px 4px 0; font-size: 18px; color: #111; }
.memdot { width: 32px; height: 33px; border-radius: 50%; background: #f5dd1e; margin-left: -9px; }

.dialog { position: absolute; left: 674px; top: 60px; width: 1004px; height: 1711px; border-radius: 22px; background: #ebebeb; box-shadow: 0 30px 70px rgba(0,0,0,.45), 0 0 3px rgba(0,0,0,.3); display: flex; flex-direction: column; overflow: hidden; }
.dlgtitle { height: 56px; flex: none; background: #f2f2f2; border-bottom: 2px solid #cbcbcb; display: flex; align-items: center; position: relative; }
.dlgtitle .lights { padding-left: 16px; }
.dlgname { position: absolute; left: 332px; top: 11px; font-family: Inter, "Noto Sans", sans-serif; font-weight: 700; font-size: 26.3px; color: #4a4a4a; white-space: nowrap; }
.dlgbody { flex: 1; display: flex; min-height: 0; padding-bottom: 13px; }
.lcol { width: 552px; padding-left: 18px; flex: none; display: flex; flex-direction: column; }
.facelabel { height: 62px; display: flex; align-items: center; padding-left: 9px; font-size: 23px; color: #111; }
.facelist { width: 511px; height: 1430px; background: #fff; border: 1px solid #b0b0b0; border-top: 2px solid #999; flex: none; }
.fitem { height: 30px; display: flex; align-items: center; padding: 0 0 1px 11px; font-size: 18.5px; color: #111; }
.searchlabel { height: 50px; display: flex; align-items: center; font-size: 18px; color: #111; }
.field { background: #fff; box-shadow: 0 1px 1px rgba(0,0,0,.25); flex: none; }
.field-search { width: 508px; height: 38px; margin-left: 2px; }
.btn-dreset { width: 104px; margin: 22px 0 0 -4px; }

.rcol { flex: 1; display: flex; flex-direction: column; padding-top: 74px; color: #b3b3b3; }
.bctop { height: 102px; display: flex; flex: none; }
.bcleft { width: 232px; padding-left: 8px; flex: none; }
.bctype { height: 34px; display: flex; align-items: center; padding-bottom: 2px; font-size: 23.5px; color: #111; }
.combo { background: #f4f4f4; border-radius: 11px; box-shadow: 0 1px 2px rgba(0,0,0,.15); display: flex; align-items: center; justify-content: flex-end; }
.comboline { fill: none; stroke: #666; stroke-width: 2.5; }
.combo-bc { width: 180px; height: 40px; margin: 17px 0 0 4px; padding-right: 12px; }
.combo-proj { width: 396px; height: 40px; margin: 14px 0 0 18px; padding-right: 12px; flex: none; }
.bcright { flex: 1; }
.dirline { height: 28px; margin-top: 17px; padding-left: 6px; display: flex; align-items: center; gap: 6px; font-size: 22.8px; color: #111; }
.dirspin { display: flex; align-items: center; margin-top: 21px; }
.dirfield { width: 170px; height: 28px; background: #fff; box-shadow: 0 1px 1px rgba(0,0,0,.25); padding-left: 3px; font-size: 16px; line-height: 30px; color: #c4c4c4; }
.arrows-dis { background: #f2f2f2; }
.dcb { width: 19px; height: 19px; flex: none; background: #f0f0f0; border: 1px solid #dcdcdc; border-radius: 4px; display: flex; align-items: center; justify-content: center; }
.dcb-white { background: #fff; border-color: #c8c8c8; width: 20px; }
.dcbb { width: 28px; height: 27px; flex: none; background: #efefef; border: 1px solid #dcdcdc; border-radius: 8px; display: flex; align-items: center; justify-content: center; }
.checkline { fill: none; stroke: #aaa; stroke-width: 2.5; }
.hd { height: 30px; flex: none; display: flex; align-items: center; padding: 0 0 2px 9px; font-size: 22.4px; }
.opt { height: 28px; flex: none; display: flex; align-items: center; gap: 6px; padding-left: 17px; font-size: 22.8px; }
.opt > span { margin-top: -1px; }
.opt-in { padding-left: 20px; gap: 8px; font-size: 22.5px; }
.flat { color: #111; font-size: 18px; }
.valrow { height: 50px; flex: none; display: flex; align-items: center; padding-left: 6px; }
.vlab { width: 64px; font-size: 18px; flex: none; }
.field-val { width: 356px; height: 50px; padding-left: 2px; font-size: 17px; color: #bdbdbd; display: flex; align-items: center; }
.slab { height: 26px; flex: none; display: flex; align-items: center; padding-left: 6px; font-size: 19px; }
.slab-sm { font-size: 18.3px; }
.slab-in { padding-left: 10px; font-size: 18px; }
.filerow { height: 45px; flex: none; display: flex; align-items: center; padding-left: 8px; gap: 12px; }
.filerow-in { padding-left: 12px; }
.field-file { width: 364px; height: 38px; }
.field-file2 { width: 342px; height: 38px; }
.dots { width: 44px; height: 45px; border: 2px solid #cdcdcd; display: flex; align-items: center; justify-content: center; font-size: 16px; color: #888; padding-top: 4px; flex: none; }
.sep { width: 433px; height: 1px; flex: none; background: #c9c9c9; box-shadow: 0 1px 0 #fafafa; }
.sep-short { width: 411px; margin-left: 4px; }
.optbig { height: 27px; flex: none; display: flex; align-items: center; gap: 8px; padding-left: 4px; font-size: 18px; }
.effrow { height: 38px; margin-top: 9px; flex: none; display: flex; align-items: center; padding-left: 5px; font-size: 18px; }
.efflab { width: 167px; flex: none; white-space: nowrap; }
.field-eff { width: 242px; height: 38px; }
.dlgfoot { margin-top: auto; display: flex; justify-content: flex-end; gap: 32px; padding-right: 14px; flex: none; }
.btn-cancel { width: 134px; color: #222; }
.btn-ok { width: 134px; background: linear-gradient(180deg, #2a94ff, #0a78f5); color: #fff; font-weight: 600; }

.m-time { margin-top: 20px; }
.m-steady { margin-top: 17px; }
.m-val { margin-top: 13px; }
.m-val2 { margin-top: 13px; }
.m-uns { margin-top: 15px; }
.m-tv { margin-top: 12px; }
.m-f1 { margin-top: 9px; }
.m-f2 { margin-top: 10px; }
.m-s1 { margin-top: 16px; }
.m-s2 { margin-top: 8px; }
.m-res { margin-top: 9px; }
.m-ts { margin-top: 11px; }
.m-prof { margin-top: 37px; }
.m-zero { margin-top: 24px; }
.m-flux { margin-top: 5px; }
.m-s3 { margin-top: 6px; }
.m-flat { margin-top: 9px; }
.m-para { margin-top: 6px; }
.m-sp { margin-top: 7px; }
.m-imp { margin-top: 10px; }
```
